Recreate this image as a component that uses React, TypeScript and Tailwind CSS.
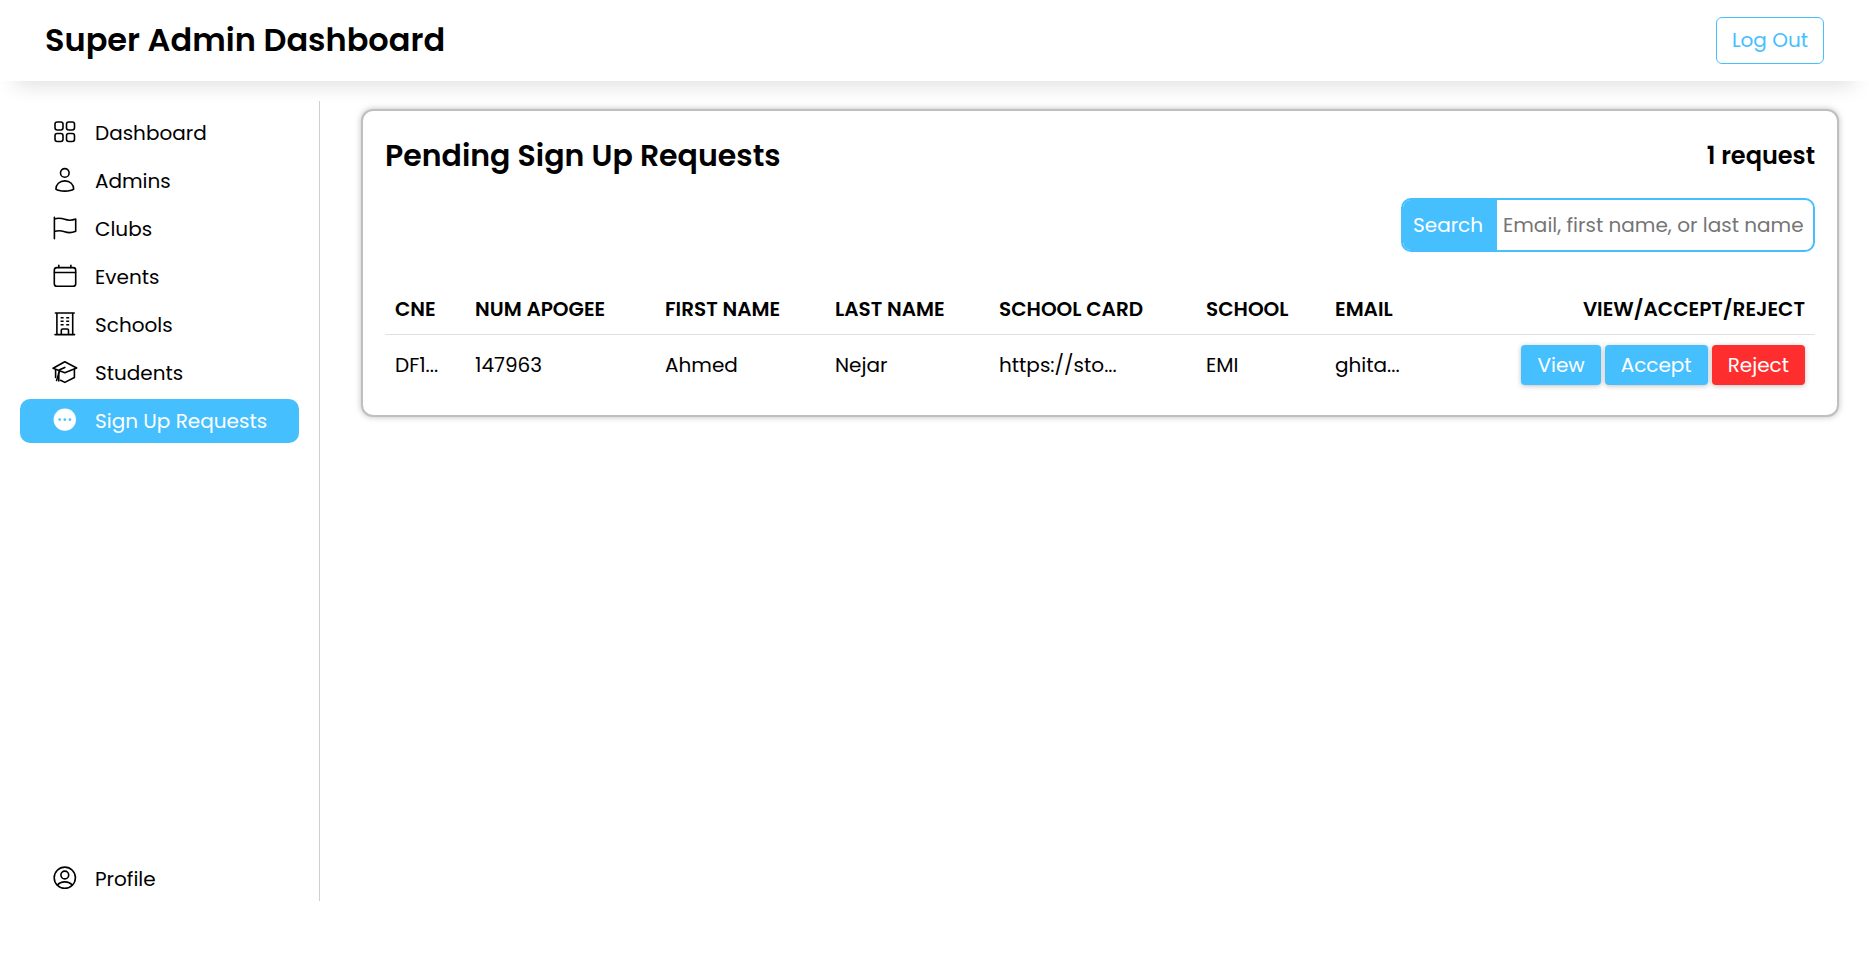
import type { ReactNode } from 'react';

type IconProps = { children: ReactNode };

function Icon({ children }: IconProps) {
  return (
    <svg
      viewBox="0 0 24 24"
      className="mb-0.5 size-6 shrink-0 overflow-visible"
      fill="none"
      stroke="currentColor"
      strokeWidth="1.6"
      strokeLinecap="round"
      strokeLinejoin="round"
      aria-hidden="true"
    >
      {children}
    </svg>
  );
}

const icons = {
  dashboard: (
    <Icon>
      <rect x="2" y="2" width="8" height="8" rx="2.2" />
      <rect x="13.5" y="2" width="8" height="8" rx="2.2" />
      <rect x="2" y="13.5" width="8" height="8" rx="2.2" />
      <rect x="13.5" y="13.5" width="8" height="8" rx="2.2" />
    </Icon>
  ),
  admins: (
    <Icon>
      <circle cx="11.8" cy="4.9" r="4.3" />
      <path d="M2.9 21.2C2.9 16.4 6.5 12.9 11.8 12.9s8.9 3.5 8.9 8.3c-1.6 1.2-5 1.9-8.9 1.9s-7.3-.7-8.9-1.9Z" />
    </Icon>
  ),
  clubs: (
    <Icon>
      <path d="M1.4 1.4v21.4M1.4 2.9c3.8-1.2 6.6-1 10.3.4 3.9 1.4 7.1 1.2 11-.3v12.3c-3.9 1.7-7.1 1.9-11 .5-3.7-1.3-6.5-1.5-10.3-.3" />
    </Icon>
  ),
  events: (
    <Icon>
      <rect x="1.3" y="3.6" width="21.4" height="18.7" rx="2.6" />
      <path d="M1.5 8.5h21M5.8 1.2v2.4M17.9 1.2v2.4" />
    </Icon>
  ),
  schools: (
    <Icon>
      <path d="M2.4 1h18.8M2 22.6h19.6M3.9 1v21.5M19.7 1v21.5M8.3 22.5v-4.2c0-.9.5-1.3 1.3-1.3h4.6c.8 0 1.3.4 1.3 1.3v4.2" />
      <path
        d="M7.6 5.8h3M13.2 5.8h3M7.6 9.2h3M13.2 9.2h3M7.6 12.7h3M13.2 12.7h3"
        strokeLinecap="butt"
      />
    </Icon>
  ),
  students: (
    <Icon>
      <path d="M11.8 1.7 23.7 8l-11.9 4.7L.1 8.3Z" />
      <path d="M21.4 9.3v8.2l-9.6 4.9-4.2-2.1M2.6 9.7v7.8" />
      <path d="M11.8 7.4 6.6 9.8c-.8 3.5-1.7 7.3-3 10.7M6.4 11.5 4.8 18.2M5.8 14v7" />
    </Icon>
  ),
  requests: (
    <Icon>
      <circle cx="11.8" cy="11.6" r="11.2" fill="currentColor" stroke="none" />
      <g fill="#46bfff" stroke="none">
        <circle cx="6.7" cy="11.6" r="1.3" />
        <circle cx="11.8" cy="11.6" r="1.3" />
        <circle cx="16.9" cy="11.6" r="1.3" />
      </g>
    </Icon>
  ),
  profile: (
    <Icon>
      <circle cx="11.8" cy="11.7" r="10.6" />
      <circle cx="11.8" cy="9" r="3.9" />
      <path d="M4.4 19.2c1.6-2.2 4.3-3.3 7.4-3.3s5.8 1.1 7.4 3.3" />
    </Icon>
  ),
};

const links = [
  { label: 'Dashboard', icon: icons.dashboard },
  { label: 'Admins', icon: icons.admins },
  { label: 'Clubs', icon: icons.clubs },
  { label: 'Events', icon: icons.events },
  { label: 'Schools', icon: icons.schools },
  { label: 'Students', icon: icons.students },
  { label: 'Sign Up Requests', icon: icons.requests, active: true },
];

function NavLink({ label, icon, active }: { label: string; icon: ReactNode; active?: boolean }) {
  return (
    <a
      href="#"
      aria-current={active ? 'page' : undefined}
      className={
        active
          ? 'flex h-11 items-center gap-[18px] rounded-[10px] bg-[#46bfff] pl-[33px] text-white'
          : 'flex h-11 items-center gap-[18px] rounded-[10px] pl-[33px] text-black'
      }
    >
      {icon}
      <span>{label}</span>
    </a>
  );
}

const columns = [
  { title: 'CNE', width: 'w-20' },
  { title: 'NUM APOGEE', width: 'w-[190px]' },
  { title: 'FIRST NAME', width: 'w-[170px]' },
  { title: 'LAST NAME', width: 'w-[164px]' },
  { title: 'SCHOOL CARD', width: 'w-[207px]' },
  { title: 'SCHOOL', width: 'w-[129px]' },
  { title: 'EMAIL', width: 'w-[100px]' },
];

const requests = [['DF1...', '147963', 'Ahmed', 'Nejar', 'https://sto...', 'EMI', 'ghita...']];

const actionClass = 'h-10 rounded px-4 text-white shadow-[0_1px_5px_rgba(0,0,0,0.25)]';

export default function App() {
  return (
    <div className="flex min-h-screen flex-col bg-white font-['Poppins','Inter',sans-serif] text-[20px] leading-[30px] text-black">
      <header className="flex h-[81px] items-center justify-between px-[45px] shadow-[0_20px_20px_-15px_rgba(0,0,0,0.12)]">
        <h1 className="pb-0.5 text-[32px] leading-[48px] font-semibold">Super Admin Dashboard</h1>
        <button
          type="button"
          className="h-[47px] rounded-md border border-[#46bfff] px-[15px] pb-0.5 text-[#46bfff]"
        >
          Log Out
        </button>
      </header>

      <div className="flex grow pt-5 pb-13">
        <nav className="flex w-80 shrink-0 flex-col justify-between border-r border-[#cfcfcf] pt-2.5 pr-5 pl-5">
          <div className="flex flex-col gap-1">
            {links.map((link) => (
              <NavLink key={link.label} {...link} />
            ))}
          </div>
          <NavLink label="Profile" icon={icons.profile} />
        </nav>

        <main className="min-w-0 grow pt-2 pr-[30px] pl-[41px]">
          <section className="rounded-xl border-2 border-[#bfbfbf] bg-white px-[22px] pt-[22px] pb-5 shadow-[0_0_6px_rgba(0,0,0,0.25)]">
            <div className="flex items-center justify-between">
              <h2 className="text-[30px] leading-[45px] font-semibold">Pending Sign Up Requests</h2>
              <p className="text-[24px] leading-[45px] font-semibold">1 request</p>
            </div>

            <form className="mt-5 flex justify-end" onSubmit={(e) => e.preventDefault()}>
              <div className="flex h-[54px] w-[414px] overflow-hidden rounded-[10px] border-2 border-[#46bfff]">
                <label htmlFor="search" className="flex w-[94px] shrink-0 items-center bg-[#46bfff] pl-2.5 text-white">
                  Search
                </label>
                <input
                  id="search"
                  type="text"
                  placeholder="Email, first name, or last name"
                  className="min-w-0 grow px-1.5 outline-none placeholder:text-[#757575]"
                />
              </div>
            </form>

            <table className="mt-7 w-full table-fixed text-left">
              <thead>
                <tr className="border-b border-[#dee2e6]">
                  {columns.map((column) => (
                    <th key={column.title} className={`${column.width} px-2.5 pt-3.5 pb-2.5 font-semibold whitespace-nowrap`}>
                      {column.title}
                    </th>
                  ))}
                  <th className="px-2.5 pt-3.5 pb-2.5 text-right font-semibold whitespace-nowrap">VIEW/ACCEPT/REJECT</th>
                </tr>
              </thead>
              <tbody>
                {requests.map((row) => (
                  <tr key={row[1]}>
                    {row.map((cell) => (
                      <td key={cell} className="px-2.5 py-2.5 whitespace-nowrap">
                        {cell}
                      </td>
                    ))}
                    <td className="px-2.5 py-2.5">
                      <div className="flex justify-end gap-1">
                        <button type="button" className={`${actionClass} bg-[#46bfff]`}>
                          View
                        </button>
                        <button type="button" className={`${actionClass} bg-[#46bfff]`}>
                          Accept
                        </button>
                        <button type="button" className={`${actionClass} bg-[#ff2e2e]`}>
                          Reject
                        </button>
                      </div>
                    </td>
                  </tr>
                ))}
              </tbody>
            </table>
          </section>
        </main>
      </div>
    </div>
  );
}
